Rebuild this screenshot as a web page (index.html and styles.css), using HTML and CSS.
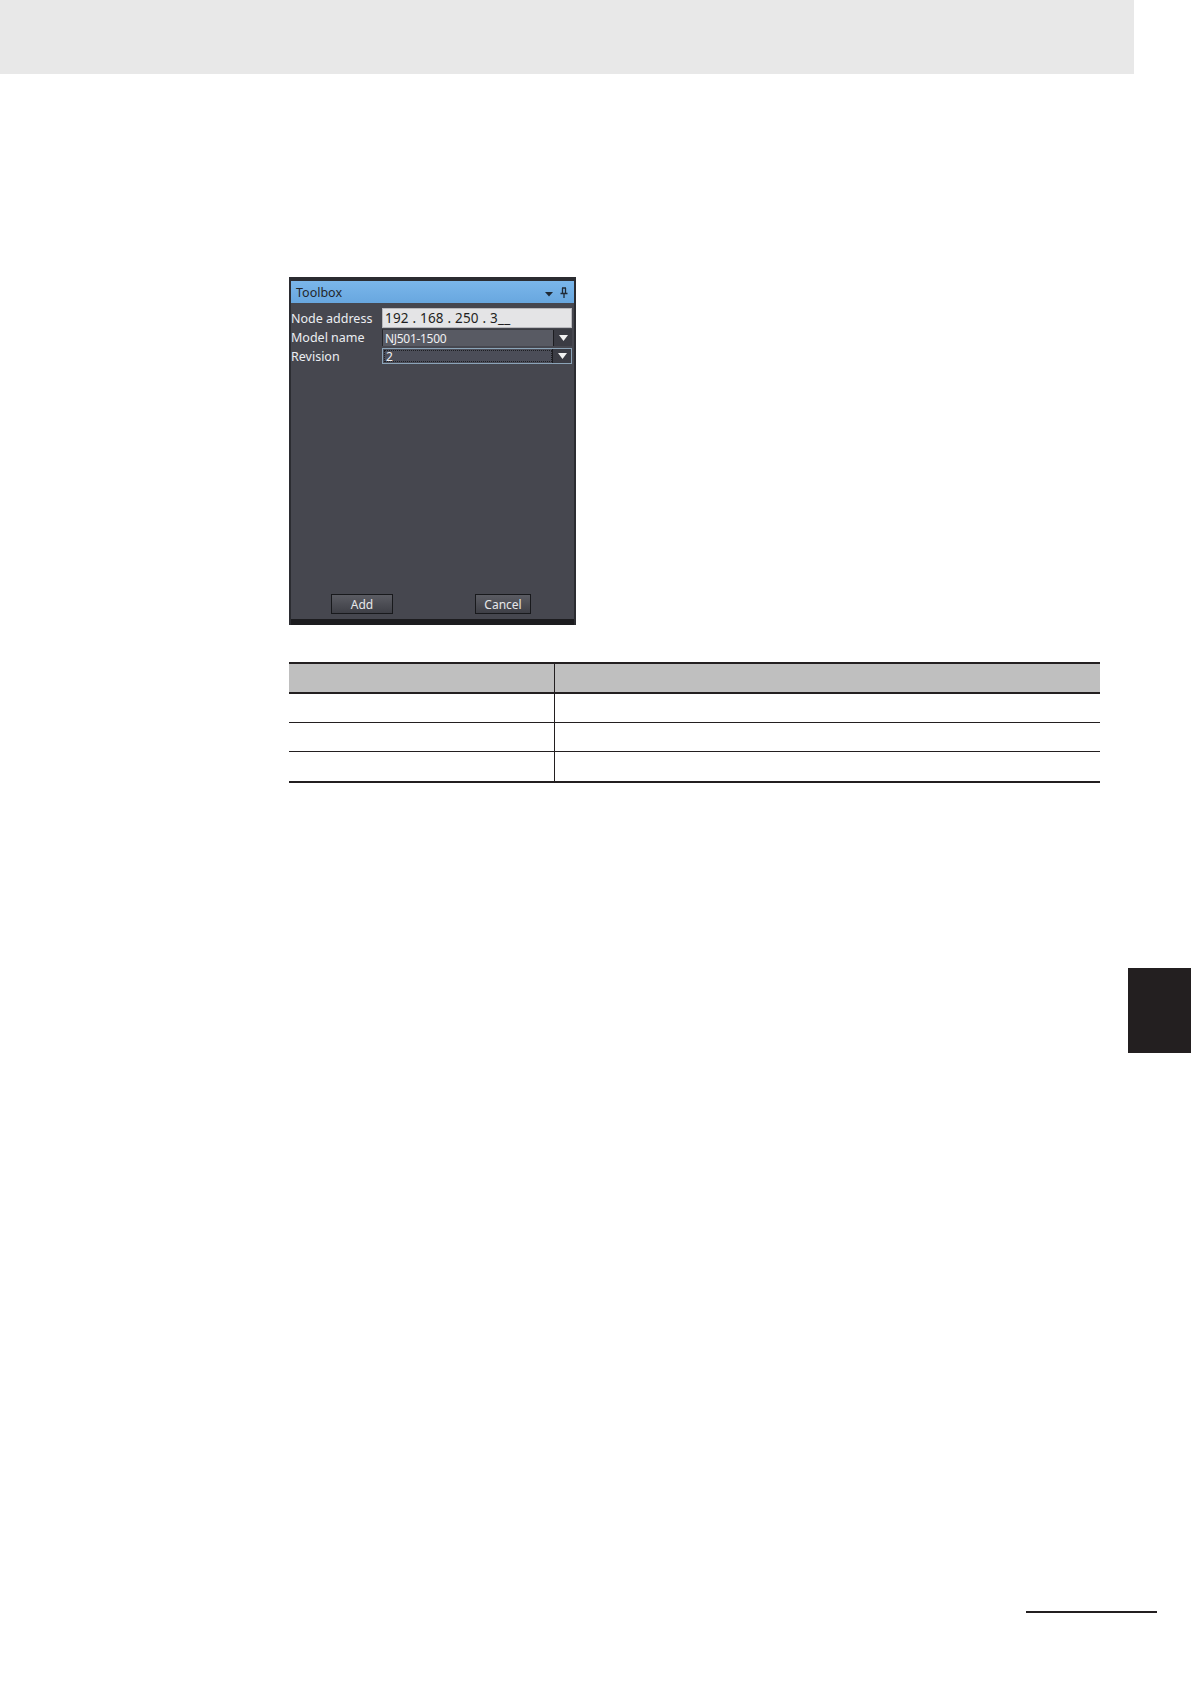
FILE: index.html
```html
<!DOCTYPE html>
<html>
<head>
<meta charset="utf-8">
<link rel="stylesheet" href="styles.css">
</head>
<body>
<div class="band"></div>
<div class="toolbox">
  <div class="tb-title">
    <span class="tb-name">Toolbox</span>
    <span class="tb-icons">
      <svg width="8" height="5" viewBox="0 0 8 5"><path d="M0 0 H8 L4 4.5 Z" fill="#1f2a36"/></svg>
      <svg width="8" height="11" viewBox="0 0 8 11"><path d="M2 1 H6 M2.5 1 V6 M5.5 1 V6 M0.5 6.5 H7.5 M4 6.5 V11" stroke="#1f2a36" stroke-width="1.3" fill="none"/></svg>
    </span>
  </div>
  <div class="tb-body">
    <div class="row r1">
      <span class="lbl">Node address</span>
      <div class="field text-field">192 . 168 . 250 . 3__</div>
    </div>
    <div class="row r2">
      <span class="lbl">Model name</span>
      <div class="field combo"><span class="combo-val">NJ501-1500</span><span class="drop"><svg width="9" height="6" viewBox="0 0 9 6"><path d="M0 0 H9 L4.5 6 Z" fill="#f2f2f2"/></svg></span></div>
    </div>
    <div class="row r3">
      <span class="lbl">Revision</span>
      <div class="field combo focused"><span class="combo-val dotted">2</span><span class="drop"><svg width="9" height="6" viewBox="0 0 9 6"><path d="M0 0 H9 L4.5 6 Z" fill="#f2f2f2"/></svg></span></div>
    </div>
    <div class="spacer"></div>
    <div class="buttons">
      <button class="btn add">Add</button>
      <button class="btn cancel">Cancel</button>
    </div>
  </div>
  <div class="tb-foot"></div>
</div>
<table class="spec">
  <tr class="head"><th class="c1"></th><th class="c2"></th></tr>
  <tr><td class="c1"></td><td class="c2"></td></tr>
  <tr><td class="c1"></td><td class="c2"></td></tr>
  <tr class="last"><td class="c1"></td><td class="c2"></td></tr>
</table>
<div class="tab"></div>
<div class="foot-line"></div>
</body>
</html>
```
FILE: styles.css
```css
html, body {
  margin: 0;
  padding: 0;
  background: #ffffff;
}
body {
  width: 1191px;
  height: 1684px;
  font-family: "Noto Sans", "Open Sans", sans-serif;
}
.band {
  width: 1134px;
  height: 74px;
  background: #e8e8e8;
}
.toolbox {
  margin-top: 203px;
  margin-left: 289px;
  width: 283px;
  height: 344px;
  border-top: 4px solid #2b2c31;
  border-left: 2px solid #2b2c31;
  border-right: 2px solid #2b2c31;
  background: #46474f;
  display: flex;
  flex-direction: column;
}
.tb-title {
  height: 22px;
  background: linear-gradient(#7ab6ea, #68a7df);
  display: flex;
  align-items: center;
  justify-content: space-between;
  padding: 0 6px 0 5px;
  flex: none;
}
.tb-name {
  font-size: 12.5px;
  color: #23262b;
}
.tb-icons {
  display: flex;
  align-items: center;
  gap: 7px;
}
.tb-icons svg:first-child {
  margin-top: 5px;
}
.tb-body {
  flex: 1;
  display: flex;
  flex-direction: column;
  padding-top: 5px;
}
.row {
  display: flex;
  align-items: center;
}
.r1 { height: 20px; margin-bottom: 1px; }
.r2 { height: 17px; margin-bottom: 2px; }
.r3 { height: 16px; }
.lbl {
  width: 91px;
  flex: none;
  font-size: 12.5px;
  color: #eceef2;
  white-space: nowrap;
}
.field {
  flex: none;
  width: 190px;
  box-sizing: border-box;
  height: 100%;
  font-size: 12.5px;
  display: flex;
  align-items: center;
}
.text-field {
  background: #e4e4e6;
  border: 1px solid #b9b9bd;
  color: #1f1f22;
  padding-left: 2px;
  font-size: 13.5px;
  letter-spacing: 0.2px;
}
.combo {
  background: #585a63;
  border-left: 1px solid #24252a;
  border-top: 1px solid #3b3c42;
  color: #f0f0f2;
  font-size: 12px;
  letter-spacing: -0.3px;
}
.combo.focused {
  background: #4b4d58;
  border: 1px solid #8ba4b8;
}
.combo-val {
  flex: 1;
  height: 100%;
  display: flex;
  align-items: center;
  padding-left: 2px;
  box-sizing: border-box;
}
.combo-val.dotted {
  border: 1px dotted #1d1e22;
  margin: 1px 0 1px 1px;
  height: calc(100% - 2px);
  padding-left: 1px;
}
.drop {
  width: 19px;
  height: 100%;
  flex: none;
  background: #3b3c44;
  border-left: 1px solid #1c1c20;
  display: flex;
  align-items: center;
  justify-content: center;
  box-sizing: border-box;
}
.spacer {
  flex: 1;
}
.buttons {
  display: flex;
  padding-left: 40px;
  gap: 82px;
  margin-bottom: 5px;
}
.btn {
  height: 20px;
  box-sizing: border-box;
  border: 1px solid #18191c;
  background: linear-gradient(#5b5c63, #3e3f46);
  color: #e6e7ea;
  font-family: "Noto Sans", "Open Sans", sans-serif;
  font-size: 12px;
  padding: 0;
  line-height: 17px;
}
.btn.add { width: 62px; }
.btn.cancel { width: 56px; }
.tb-foot {
  height: 6px;
  background: #1c1c1f;
  flex: none;
}
.spec {
  margin-top: 37px;
  margin-left: 289px;
  width: 811px;
  border-collapse: collapse;
  border-top: 2px solid #231f20;
  border-bottom: 2px solid #231f20;
}
.spec th, .spec td {
  padding: 0;
  height: 28px;
  border-bottom: 1px solid #231f20;
}
.spec .head th {
  background: #bfbfbf;
  border-bottom: 2px solid #231f20;
}
.spec .last td {
  border-bottom: none;
  height: 29px;
}
.spec .c1 {
  width: 265px;
  border-right: 1px solid #231f20;
}
.tab {
  margin-top: 185px;
  margin-left: 1128px;
  width: 63px;
  height: 85px;
  background: #231f20;
}
.foot-line {
  margin-top: 558px;
  margin-left: 1026px;
  width: 131px;
  height: 2px;
  background: #231f20;
}
```
